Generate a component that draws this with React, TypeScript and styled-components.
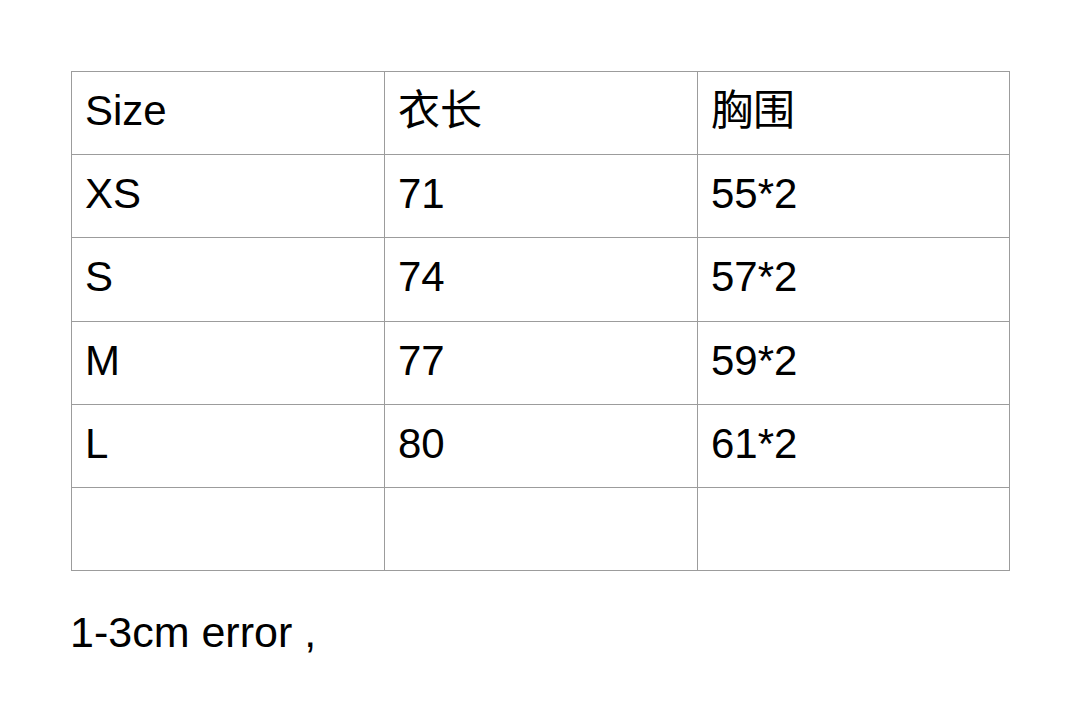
import React from "react";
import styled, { createGlobalStyle } from "styled-components";

const Global = createGlobalStyle`
  html, body { margin: 0; padding: 0; background: #ffffff; }
  body { font-family: "Liberation Sans", Arial, "Noto Sans CJK SC", sans-serif; color: #000; }
`;

const Page = styled.div`
  padding: 71px 71px 0 71px;
`;

const Grid = styled.div`
  display: grid;
  grid-template-columns: 313px 313px 312px;
  grid-template-rows: 83px 83px 84px 83px 83px 83px;
  width: 938px;
  border-top: 1px solid #9c9c9c;
  border-left: 1px solid #9c9c9c;
`;

const Cell = styled.div`
  display: flex;
  align-items: center;
  padding: 0 0 5px 13px;
  border-right: 1px solid #9c9c9c;
  border-bottom: 1px solid #9c9c9c;
  font-size: 42px;
  line-height: 1;
  font-family: "Liberation Sans", Arial, "Noto Sans CJK SC", sans-serif;
`;

const Note = styled.p`
  margin: 36px 0 0 -1px;
  font-size: 43px;
  line-height: 1.2;
`;

const rows: string[][] = [
  ["Size", "衣长", "胸围"],
  ["XS", "71", "55*2"],
  ["S", "74", "57*2"],
  ["M", "77", "59*2"],
  ["L", "80", "61*2"],
  ["", "", ""],
];

export default function App() {
  return (
    <Page>
      <Global />
      <Grid>
        {rows.flatMap((r, i) => r.map((c, j) => <Cell key={`${i}-${j}`}>{c}</Cell>))}
      </Grid>
      <Note>1-3cm error ,</Note>
    </Page>
  );
}
